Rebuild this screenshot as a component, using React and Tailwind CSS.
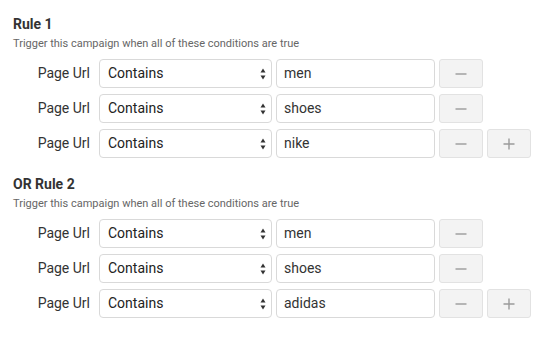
import React from "react";

const rules = [
  { title: "Rule 1", values: ["men", "shoes", "nike"] },
  { title: "OR Rule 2", values: ["men", "shoes", "adidas"] },
];

function SelectArrows() {
  return (
    <svg width="6" height="12" viewBox="0 0 6 12" className="absolute right-[5px] top-1/2 -translate-y-1/2">
      <path d="M3 0.5 L5.5 4.5 L0.5 4.5 Z" fill="#333" />
      <path d="M3 11.5 L5.5 7.5 L0.5 7.5 Z" fill="#333" />
    </svg>
  );
}

function ConditionRow({ value, last }) {
  return (
    <div className="flex items-center h-[29px]">
      <div className="w-[86px] pr-[9px] text-right text-[14px] text-[#333]">Page Url</div>
      <div className="relative w-[173px] h-full flex items-center pl-[8px] border border-[#d9d9d9] rounded-[4px] text-[14px] text-[#222]">
        Contains
        <SelectArrows />
      </div>
      <div className="ml-[4px] w-[159px] h-full flex items-center pl-[7px] border border-[#d9d9d9] rounded-[4px] text-[14px] text-[#333]">
        {value}
      </div>
      <button className="ml-[4px] w-[44px] h-full flex items-center justify-center bg-[#f3f3f3] border border-[#e2e2e2] rounded-[3px]">
        <svg width="12" height="12" viewBox="0 0 12 12">
          <path d="M0.5 6 H11.5" stroke="#9a9a9a" strokeWidth="1.4" />
        </svg>
      </button>
      {last && (
        <button className="ml-[4px] w-[44px] h-full flex items-center justify-center bg-[#f3f3f3] border border-[#e2e2e2] rounded-[3px]">
          <svg width="12" height="12" viewBox="0 0 12 12">
            <path d="M0.5 6 H11.5 M6 0.5 V11.5" stroke="#9a9a9a" strokeWidth="1.4" />
          </svg>
        </button>
      )}
    </div>
  );
}

export default function App() {
  return (
    <div className="w-[547px] h-[341px] bg-white pt-[14px] pl-[13px] font-['Roboto',sans-serif]">
      {rules.map((rule, i) => (
        <div key={rule.title} className={i > 0 ? "mt-[16px]" : ""}>
          <h2 className="text-[14px] leading-[20px] font-bold text-[#333]">{rule.title}</h2>
          <p className="mt-[2px] text-[11px] leading-[16px] text-[#666]">
            Trigger this campaign when all of these conditions are true
          </p>
          <div className="mt-[7px] flex flex-col gap-[6px]">
            {rule.values.map((v, j) => (
              <ConditionRow key={j} value={v} last={j === rule.values.length - 1} />
            ))}
          </div>
        </div>
      ))}
    </div>
  );
}
